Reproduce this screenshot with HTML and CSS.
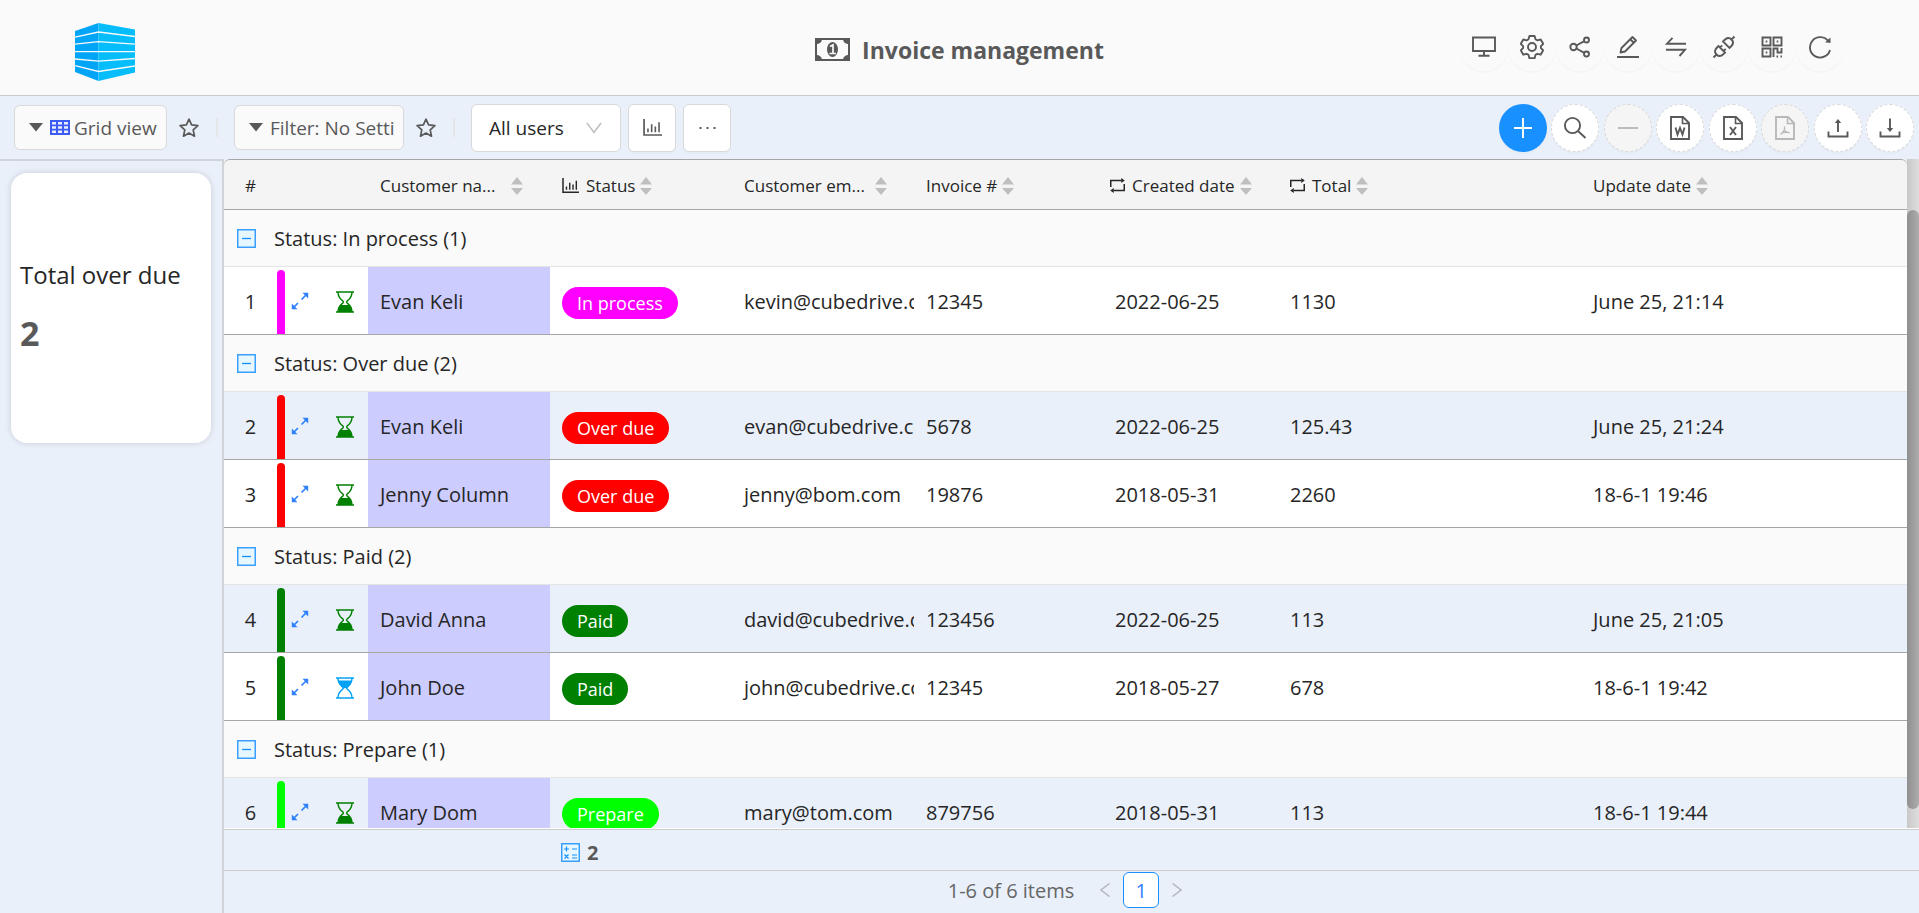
FILE: index.html
```html
<!DOCTYPE html>
<html lang="en">
<head>
<meta charset="utf-8">
<title>Invoice management</title>
<link rel="stylesheet" href="styles.css">
</head>
<body>
<svg class="defs" aria-hidden="true">
  <symbol id="star" viewBox="0 0 20 20"><path d="M10 1.200l2.600 5.700 6.300.7-4.700 4.200 1.300 6.400L10 15l-5.500 3.200 1.300-6.400-4.700-4.200 6.300-.7z" fill="none" stroke="currentColor" stroke-width="1.700" stroke-linejoin="round"/></symbol>
  <symbol id="caret" viewBox="0 0 14 9"><path d="M0 0h14L7 8.500z" fill="currentColor"/></symbol>
  <symbol id="sorter" viewBox="0 0 12 18"><path d="M0 7.500L6 0l6 7.500zM0 11h12l-6 7z" fill="#bfbfbf"/></symbol>
  <symbol id="chart" viewBox="0 0 18 16"><path d="M1 0v15.100h17" fill="none" stroke="currentColor" stroke-width="1.600"/><path d="M4.700 12.500V9M8.200 12.500V5M11.700 12.500V7M15.200 12.500V3" fill="none" stroke="currentColor" stroke-width="1.500"/></symbol>
  <symbol id="loop" viewBox="0 0 14 14"><path d="M.7 8.500V2.300h10M13.300 5.500v6.200h-10" fill="none" stroke="currentColor" stroke-width="1.400"/><path d="M10.500 0L13.800 2.300 10.500 4.600zM3.500 9.400L.2 11.700l3.300 2.300z" fill="currentColor"/></symbol>
  <symbol id="minus" viewBox="0 0 19 19"><rect x=".75" y=".75" width="17.500" height="17.500" fill="#e6f7ff" stroke="#3a9fff" stroke-width="1.500"/><path d="M5 9.500h9" stroke="#1890ff" stroke-width="1.300"/></symbol>
  <symbol id="expand" viewBox="0 0 18 18"><path d="M10.500 7.500L15 3M3 15l4-4" stroke="#2f80ff" stroke-width="1.700" fill="none"/><path d="M11.500.8h5.700v5.700zM.8 11.500v5.700h5.700z" fill="#2f80ff"/></symbol>
  <symbol id="hg-low" viewBox="0 0 20 22"><path d="M1 1h18M1 21h18" stroke="currentColor" stroke-width="1.700"/><path d="M3 1c0 6 3 7.500 5.200 9.300v1.400C6 13.500 3 15 3 21M17 1c0 6-3 7.500-5.200 9.300v1.400C14 13.500 17 15 17 21" fill="none" stroke="currentColor" stroke-width="1.400"/><path d="M3 21c.2-3 1.200-5.500 3-7h8c1.800 1.500 2.800 4 3 7z" fill="currentColor"/></symbol>
  <symbol id="hg-high" viewBox="0 0 20 22"><path d="M1 1h18M1 21h18" stroke="currentColor" stroke-width="1.700"/><path d="M3 1c0 6 3 7.500 5.200 9.300v1.400C6 13.500 3 15 3 21M17 1c0 6-3 7.500-5.200 9.300v1.400C14 13.500 17 15 17 21" fill="none" stroke="currentColor" stroke-width="1.400"/><path d="M3.200 3.500h13.600c-.4 4-2.300 5.400-5 7.800H8.200c-2.700-2.400-4.600-3.800-5-7.800z" fill="currentColor"/></symbol>
  <symbol id="doc" viewBox="0 0 20 24"><path d="M1 1h12l6 6v16H1z" fill="none" stroke="currentColor" stroke-width="1.900"/><path d="M12.500 1v6.500H19" fill="none" stroke="currentColor" stroke-width="1.600"/></symbol>
</svg>
<div class="app">
  <header class="topbar">
    <a class="logo" href="#" aria-label="Home">
      <svg viewBox="0 0 60 58" width="60" height="58">
        <path d="M0 8L23.500 0v58L0 49z" fill="#00a5f7"/>
        <path d="M23.500 0L60 6.500V49.500L23.500 58z" fill="#06bdfb"/>
        <g fill="none" stroke="#fafafa" stroke-width="1.300">
          <path d="M0 14.200L23.500 9 60 13.500M0 21.200L23.500 18.700 60 21.200M0 28.700h60M0 36l23.500 2.200L60 35.500M0 42.700l23.500 5.800L60 43"/>
        </g>
      </svg>
    </a>
    <h1 class="title">
      <svg viewBox="0 0 35 23" width="35" height="23"><rect x="1" y="1" width="33" height="21" fill="#fafafa" stroke="#595959" stroke-width="2"/><path d="M1 1h6c0 3-2.500 5-6 5zM34 1h-6c0 3 2.500 5 6 5zM1 22h6c0-3-2.500-5-6-5zM34 22h-6c0-3 2.500-5 6-5z" fill="#595959"/><ellipse cx="17.500" cy="11.500" rx="5.500" ry="7.500" fill="#595959"/><path d="M15 8.500l3-1.500v8.500M14.500 15.500h6.500" fill="none" stroke="#fafafa" stroke-width="1.700"/></svg>
      <span>Invoice management</span>
    </h1>
    <nav class="tools" aria-label="Table tools">
      <button aria-label="Display"><svg viewBox="0 0 24 24"><path d="M1 2.500h22v13.500H1zM12 16v4.500M6.500 20.800h11"/></svg></button>
      <button aria-label="Settings"><svg viewBox="0 0 24 24"><path d="M9.400 1h5.200l.9 3.300 1.900 1.100 3.300-.9 2.500 4.300-2.300 2.400v1.800l2.300 2.300-2.500 4.400-3.300-.9-1.900 1.100-.9 3.300H9.400l-.9-3.300-1.900-1.100-3.300.9-2.500-4.400L3.100 13v-1.800L.8 8.800l2.500-4.300 3.300.9 1.900-1.100z" stroke-linejoin="round"/><circle cx="12" cy="12" r="4"/></svg></button>
      <button aria-label="Share"><svg viewBox="0 0 24 24"><circle cx="5.500" cy="12" r="3.200"/><circle cx="18.500" cy="5" r="2.500"/><circle cx="18.500" cy="19" r="2.500"/><path d="M8.300 10.500l8-4.300M8.300 13.500l8 4.300"/></svg></button>
      <button aria-label="Edit"><svg viewBox="0 0 24 24"><path d="M1 22h22M4.500 17.500l1-4.500L16.500 2l3.500 3.500L9 16.500zM14.500 4.500L18 8" stroke-linejoin="round"/></svg></button>
      <button aria-label="Swap"><svg viewBox="0 0 24 24"><path d="M22 8.700H3L8.500 2.800M2 14.800h19L15.500 21"/></svg></button>
      <button aria-label="Connect"><svg viewBox="0 0 24 24"><path d="M1.500 22.500l3-3M19.500 4.500l3-3M4.500 19.500c-2.500-2.500-1.500-5 .5-7l1.500-1.500 6.500 6.500-1.500 1.500c-2 2-4.500 3-7 .5zM19.500 4.500c-2.500-2.500-5-1.500-7 .5L11 6.500l6.500 6.500L19 11.500c2-2 3-4.500.5-7zM8 12.500l2.200-2.200M11.500 16l2.200-2.200"/></svg></button>
      <button aria-label="QR code"><svg viewBox="0 0 24 24"><path d="M2.500 2.500h8v8h-8zM13.500 2.500h8v8h-8zM2.500 13.500h8v8h-8zM13.500 22v-8.500h4v4h4V13M5.700 6.500h1.600M16.700 6.500h1.600M5.700 17.500h1.600M16.500 21.500h1.600M20.500 21.500H22"/></svg></button>
      <button aria-label="Reload"><svg viewBox="0 0 24 24"><path d="M20.500 6.500A10.200 10.200 0 1 0 22 15"/><path d="M22.500 2.500v5.500l-5.500-.8z" fill="currentColor" stroke="none"/></svg></button>
    </nav>
  </header>

  <div class="toolbar">
    <div class="views">
      <button class="drop"><svg class="caret"><use href="#caret"/></svg><svg class="gridicon" viewBox="0 0 20 15"><rect width="20" height="15" fill="#3d5af1"/><path d="M2 2h4v2.500H2zM8 2h4v2.500H8zM14 2h4v2.500h-4zM2 6.300h4v2.500H2zM8 6.300h4v2.500H8zM14 6.300h4v2.500h-4zM2 10.600h4v2.500H2zM8 10.600h4v2.500H8zM14 10.600h4v2.500h-4z" fill="#e8edff"/></svg><span>Grid view</span></button>
      <button class="plain" aria-label="Save view"><svg><use href="#star"/></svg></button>
      <i class="divider"></i>
      <button class="drop filter"><svg class="caret"><use href="#caret"/></svg><span>Filter: No Setti</span></button>
      <button class="plain" aria-label="Save filter"><svg><use href="#star"/></svg></button>
      <i class="divider"></i>
    </div>
    <div class="users">
      <label class="selectbox"><select aria-label="Users"><option>All users</option></select><svg viewBox="0 0 16 12" width="16" height="12"><path d="M1 1l7 9.500L15 1" fill="none" stroke="#bfbfbf" stroke-width="1.500"/></svg></label>
      <button class="square" aria-label="Chart"><svg width="19" height="17"><use href="#chart"/></svg></button>
      <button class="square" aria-label="More"><svg width="17" height="4" viewBox="0 0 17 4"><path d="M.5 1h2v2h-2zM7.500 1h2v2h-2zM14.500 1h2v2h-2z" fill="#595959"/></svg></button>
    </div>
    <div class="actions">
      <button class="primary" aria-label="Add"><svg viewBox="0 0 24 24"><path d="M12 2v20M3 12h18"/></svg></button>
      <button aria-label="Search"><svg viewBox="0 0 24 24"><circle cx="9.500" cy="9.500" r="7.600"/><path d="M15 15l7.500 7"/></svg></button>
      <button disabled aria-label="Delete"><svg viewBox="0 0 24 24"><path d="M2 12h20"/></svg></button>
      <button aria-label="Export to Word"><svg viewBox="0 0 24 24"><use href="#doc" x="2" width="20" height="24"/><path d="M7.500 11.500l2 7 2.500-6.500 2.500 6.500 2-7"/></svg></button>
      <button aria-label="Export to Excel"><svg viewBox="0 0 24 24"><use href="#doc" x="2" width="20" height="24"/><path d="M9 11l6 8M15 11l-6 8"/></svg></button>
      <button disabled aria-label="Export to PDF"><svg viewBox="0 0 24 24"><use href="#doc" x="2" width="20" height="24"/><path d="M11.500 10.500c.5 3-.5 5.500-4 8M12 14.500c1 1.800 2.500 2.500 4.500 2M9.500 16.500l5-.5" stroke-width="1.300"/></svg></button>
      <button aria-label="Upload"><svg viewBox="0 0 24 24"><path d="M2.500 15.500v5h19v-5M12 16V5"/><path d="M8.800 7L12 3l3.200 4z" fill="currentColor" stroke="none"/></svg></button>
      <button aria-label="Download"><svg viewBox="0 0 24 24"><path d="M2.500 15.500v5h19v-5M12 2.500v11"/><path d="M8.800 12l3.200 4 3.200-4z" fill="currentColor" stroke="none"/></svg></button>
    </div>
  </div>

  <div class="body">
    <aside class="side">
      <section class="card">
        <h2>Total over due</h2>
        <p>2</p>
      </section>
    </aside>
    <main class="main">
      <div class="viewport">
        <div class="sheet">
          <table>
            <colgroup><col class="c-num"><col class="c-open"><col class="c-state"><col class="c-text"><col class="c-text"><col class="c-text"><col class="c-text"><col class="c-text"><col class="c-total"><col></colgroup>
            <thead>
              <tr>
                <th class="num">#</th><th></th><th></th>
                <th><span class="head wide">Customer na...<svg class="sorter"><use href="#sorter"/></svg></span></th>
                <th><span class="head"><svg class="hicon chart"><use href="#chart"/></svg>Status<svg class="sorter"><use href="#sorter"/></svg></span></th>
                <th><span class="head mail">Customer em...<svg class="sorter"><use href="#sorter"/></svg></span></th>
                <th><span class="head">Invoice #<svg class="sorter"><use href="#sorter"/></svg></span></th>
                <th class="date"><span class="head"><svg class="hicon"><use href="#loop"/></svg>Created date<svg class="sorter"><use href="#sorter"/></svg></span></th>
                <th><span class="head"><svg class="hicon"><use href="#loop"/></svg>Total<svg class="sorter"><use href="#sorter"/></svg></span></th>
                <th><span class="head">Update date<svg class="sorter"><use href="#sorter"/></svg></span></th>
              </tr>
            </thead>
            <tbody>
              <tr class="group"><td colspan="10"><button class="fold"><svg><use href="#minus"/></svg>Status: In process (1)</button></td></tr>
              <tr class="in-process"><td class="num">1</td><td class="open"><div><i></i><svg><use href="#expand"/></svg></div></td><td class="state"><svg><use href="#hg-low"/></svg></td><td class="name">Evan Keli</td><td><span class="pill">In process</span></td><td class="email">kevin@cubedrive.com</td><td>12345</td><td class="date">2022-06-25</td><td>1130</td><td>June 25, 21:14</td></tr>
              <tr class="group"><td colspan="10"><button class="fold"><svg><use href="#minus"/></svg>Status: Over due (2)</button></td></tr>
              <tr class="over-due alt"><td class="num">2</td><td class="open"><div><i></i><svg><use href="#expand"/></svg></div></td><td class="state"><svg><use href="#hg-low"/></svg></td><td class="name">Evan Keli</td><td><span class="pill">Over due</span></td><td class="email">evan@cubedrive.com</td><td>5678</td><td class="date">2022-06-25</td><td>125.43</td><td>June 25, 21:24</td></tr>
              <tr class="over-due"><td class="num">3</td><td class="open"><div><i></i><svg><use href="#expand"/></svg></div></td><td class="state"><svg><use href="#hg-low"/></svg></td><td class="name">Jenny Column</td><td><span class="pill">Over due</span></td><td class="email">jenny@bom.com</td><td>19876</td><td class="date">2018-05-31</td><td>2260</td><td>18-6-1 19:46</td></tr>
              <tr class="group"><td colspan="10"><button class="fold"><svg><use href="#minus"/></svg>Status: Paid (2)</button></td></tr>
              <tr class="paid alt"><td class="num">4</td><td class="open"><div><i></i><svg><use href="#expand"/></svg></div></td><td class="state"><svg><use href="#hg-low"/></svg></td><td class="name">David Anna</td><td><span class="pill">Paid</span></td><td class="email">david@cubedrive.com</td><td>123456</td><td class="date">2022-06-25</td><td>113</td><td>June 25, 21:05</td></tr>
              <tr class="paid"><td class="num">5</td><td class="open"><div><i></i><svg><use href="#expand"/></svg></div></td><td class="state begun"><svg><use href="#hg-high"/></svg></td><td class="name">John Doe</td><td><span class="pill">Paid</span></td><td class="email">john@cubedrive.com</td><td>12345</td><td class="date">2018-05-27</td><td>678</td><td>18-6-1 19:42</td></tr>
              <tr class="group"><td colspan="10"><button class="fold"><svg><use href="#minus"/></svg>Status: Prepare (1)</button></td></tr>
              <tr class="prepare alt"><td class="num">6</td><td class="open"><div><i></i><svg><use href="#expand"/></svg></div></td><td class="state"><svg><use href="#hg-low"/></svg></td><td class="name">Mary Dom</td><td><span class="pill">Prepare</span></td><td class="email">mary@tom.com</td><td>879756</td><td class="date">2018-05-31</td><td>113</td><td>18-6-1 19:44</td></tr>
            </tbody>
          </table>
        </div>
        <div class="track"><div class="thumb"></div></div>
      </div>
      <div class="summary">
        <svg viewBox="0 0 19 19" width="19" height="19"><rect x=".75" y=".75" width="17.500" height="17.500" fill="#e6f7ff" stroke="#3a9fff" stroke-width="1.500"/><path d="M3 6h5M5.500 3.500v5M11 6h5M3.500 11.500l4 4M7.500 11.500l-4 4M11 12h5M11 15h5" stroke="#1890ff" stroke-width="1.200" fill="none"/></svg>
        <strong>2</strong>
      </div>
      <nav class="pager" aria-label="Pages">
        <span>1-6 of 6 items</span>
        <button class="arrow" aria-label="Previous page"><svg viewBox="0 0 10 14"><path d="M9.500.5L1 7l8.500 6.500"/></svg></button>
        <button class="page">1</button>
        <button class="arrow" aria-label="Next page"><svg viewBox="0 0 10 14"><path d="M.5.5L9 7 .5 13.500"/></svg></button>
      </nav>
    </main>
  </div>
</div>
</body>
</html>
```

FILE: styles.css
```css
* { box-sizing: border-box; }

body {
  margin: 0;
  font-family: "Open Sans", "Noto Sans", sans-serif;
  font-size: 20px;
  color: #262626;
}

button, select {
  font: inherit;
  color: inherit;
  margin: 0;
  padding: 0;
  border: 0;
  background: none;
}

svg { display: block; flex: none; }
.defs { position: absolute; width: 0; height: 0; }

.app {
  height: 100vh;
  display: flex;
  flex-direction: column;
  background: #e9f0fa;
  overflow: hidden;
}

/* Top bar */
.topbar {
  flex: none;
  height: 96px;
  display: grid;
  grid-template-columns: 1fr auto 1fr;
  align-items: center;
  padding: 0 75px;
  background: #fafafa;
  border-bottom: 1px solid #ccc;
  color: #595959;
}
.logo { justify-self: start; padding-top: 8px; }
.title {
  display: flex;
  align-items: center;
  gap: 12px;
  margin: 0;
  padding-top: 4px;
  font-size: 23px;
  font-weight: 700;
}
.tools { display: flex; justify-self: end; padding-bottom: 2px; }
.tools button {
  width: 48px;
  height: 48px;
  display: grid;
  place-items: center;
  border-radius: 50%;
  box-shadow: 0 2px 0 rgba(0, 0, 0, .02);
}
.tools svg, .actions svg {
  width: 24px;
  height: 24px;
  fill: none;
  stroke: currentColor;
  stroke-width: 1.9px;
}

/* Toolbar */
.toolbar {
  flex: none;
  height: 63px;
  display: flex;
  align-items: center;
  padding: 0 5px 0 14px;
  color: #595959;
}
.views { display: flex; align-items: center; }
.drop {
  width: 153px;
  height: 45px;
  display: flex;
  align-items: center;
  padding-left: 14px;
  border: 1px solid #d9d9d9;
  border-radius: 6px;
  background: #fafafa;
  font-size: 19px;
  white-space: nowrap;
}
.drop.filter { width: 170px; }
.caret { width: 14px; height: 9px; margin-right: 7px; }
.gridicon { width: 20px; height: 15px; margin-right: 4px; }
.plain { padding: 0 17px 0 12px; }
.plain svg { width: 20px; height: 20px; }
.divider { width: 2px; height: 19px; margin-right: 16px; background: #e4e6e9; }
.users { display: flex; gap: 7px; }
.selectbox {
  display: grid;
  align-items: center;
  width: 150px;
  height: 48px;
}
.selectbox select, .selectbox svg { grid-area: 1 / 1; }
.selectbox svg { justify-self: end; margin-right: 19px; pointer-events: none; }
.selectbox select {
  appearance: none;
  width: 100%;
  height: 100%;
  padding-left: 17px;
  border: 1px solid #d9d9d9;
  border-radius: 6px;
  background: #fff;
  font-size: 19px;
  color: #262626;
}
.square {
  width: 48px;
  height: 48px;
  display: grid;
  place-items: center;
  border: 1px solid #d9d9d9;
  border-radius: 6px;
  background: #fff;
  box-shadow: 0 2px 0 rgba(0, 0, 0, .02);
}
.actions {
  display: flex;
  justify-content: space-between;
  width: 415px;
  margin-left: auto;
}
.actions button {
  width: 48px;
  height: 48px;
  display: grid;
  place-items: center;
  border: 1px dashed #d9d9d9;
  border-radius: 50%;
  background: #fff;
  box-shadow: 0 2px 0 rgba(0, 0, 0, .02);
}
.actions .primary { background: #1890ff; border: 0; color: #fff; }
.actions button:disabled { background: #f5f5f5; color: #b8b8b8; }

/* Side panel */
.body { flex: 1; min-height: 0; display: flex; }
.side {
  flex: none;
  width: 224px;
  padding: 12px 11px;
  border-top: 2px solid #d0d3d8;
  border-right: 2px solid #d0d3d8;
}
.card {
  height: 270px;
  padding: 84px 9px 0;
  border-radius: 16px;
  background: #fff;
  box-shadow: 0 0 6px rgba(0, 0, 0, .15);
}
.card h2 { margin: 0; font-size: 24px; line-height: 36px; font-weight: 500; white-space: nowrap; }
.card p { margin: 16px 0 0; font-size: 34px; line-height: 48px; font-weight: 700; color: #595959; }

/* Grid */
.main { flex: 1; min-width: 0; display: flex; flex-direction: column; }
.viewport { flex: 1; min-height: 0; display: flex; border-bottom: 1px solid #fff; }
.sheet { flex: 1; min-width: 0; overflow: hidden; }
table { width: 100%; table-layout: fixed; border-collapse: separate; border-spacing: 0; }
.c-num { width: 53px; }
.c-open { width: 46px; }
.c-state { width: 45px; }
.c-text { width: 182px; }
.c-total { width: 303px; }

th {
  height: 51px;
  padding: 2px 0 0 12px;
  border-top: 1px solid #a6a6a6;
  border-bottom: 1px solid #a6a6a6;
  background: #f4f4f4;
  font-size: 17px;
  font-weight: 500;
  text-align: left;
  white-space: nowrap;
}
th:first-child { border-top-left-radius: 6px; }
th:last-child { border-top-right-radius: 6px; }
th.date { padding-left: 14px; }
.head { display: flex; align-items: center; }
.sorter { width: 12px; height: 18px; margin-left: 5px; }
.wide .sorter { margin-left: 16px; }
.mail .sorter { margin-left: 10px; }
.hicon { width: 15px; height: 15px; margin-right: 7px; }
.hicon.chart { width: 17px; }

td {
  height: 68px;
  padding: 2px 0 0 12px;
  border-bottom: 1px solid #a6a6a6;
  background: #fff;
  white-space: nowrap;
  overflow: hidden;
}
.alt td { background: #e9f0fa; }
td.date { padding-left: 19px; }
th.num, td.num { padding-left: 0; text-align: center; }
.group td { height: 57px; padding-top: 0; background: #fafafa; border-bottom: 1px solid #e4e4e4; }
.fold { display: flex; align-items: center; gap: 18px; padding-left: 1px; }
.fold svg { width: 19px; height: 19px; }

td.open { padding: 0; }
.open div { display: flex; align-items: center; gap: 6px; height: 67px; padding-top: 3px; }
.open i { width: 8px; height: 64px; border-radius: 4px 4px 0 0; background: var(--tone); }
.open svg { width: 18px; height: 18px; margin-bottom: 3px; }
.state { color: green; }
.begun { color: #00a2f5; }
.state svg { width: 20px; height: 22px; }
.name, .alt .name { background: #ccf; }
.pill {
  display: inline-block;
  margin-top: 3px;
  padding: 0 15px;
  border-radius: 16px;
  background: var(--tone);
  color: #fff;
  font-size: 18px;
  line-height: 32px;
}
.in-process { --tone: #f0f; }
.over-due { --tone: #f00; }
.paid { --tone: #008000; }
.prepare { --tone: #0f0; }

.track {
  flex: none;
  width: 12px;
  padding: 51px 0 19px;
  background: linear-gradient(90deg, #c8c8c8, #dedede);
}
.thumb { height: 100%; border-radius: 6px; background: linear-gradient(90deg, #8f8f8f, #adadad); }

.summary {
  flex: none;
  height: 42px;
  display: flex;
  align-items: center;
  gap: 7px;
  padding: 4px 0 0 337px;
  border-top: 1px solid #ccc;
  border-bottom: 1px solid #ccc;
  color: #595959;
}
.pager {
  flex: none;
  height: 42px;
  display: flex;
  align-items: center;
  justify-content: center;
  padding-bottom: 4px;
  color: #666;
}
.arrow { padding: 0 13px; }
.arrow:nth-of-type(1) { margin-left: 13px; }
.arrow svg { width: 10px; height: 14px; fill: none; stroke: #b4b7bd; stroke-width: 1.5px; }
.page {
  width: 36px;
  height: 36px;
  border: 1px solid #1890ff;
  border-radius: 6px;
  background: #fff;
  color: #2f80ff;
}
```
